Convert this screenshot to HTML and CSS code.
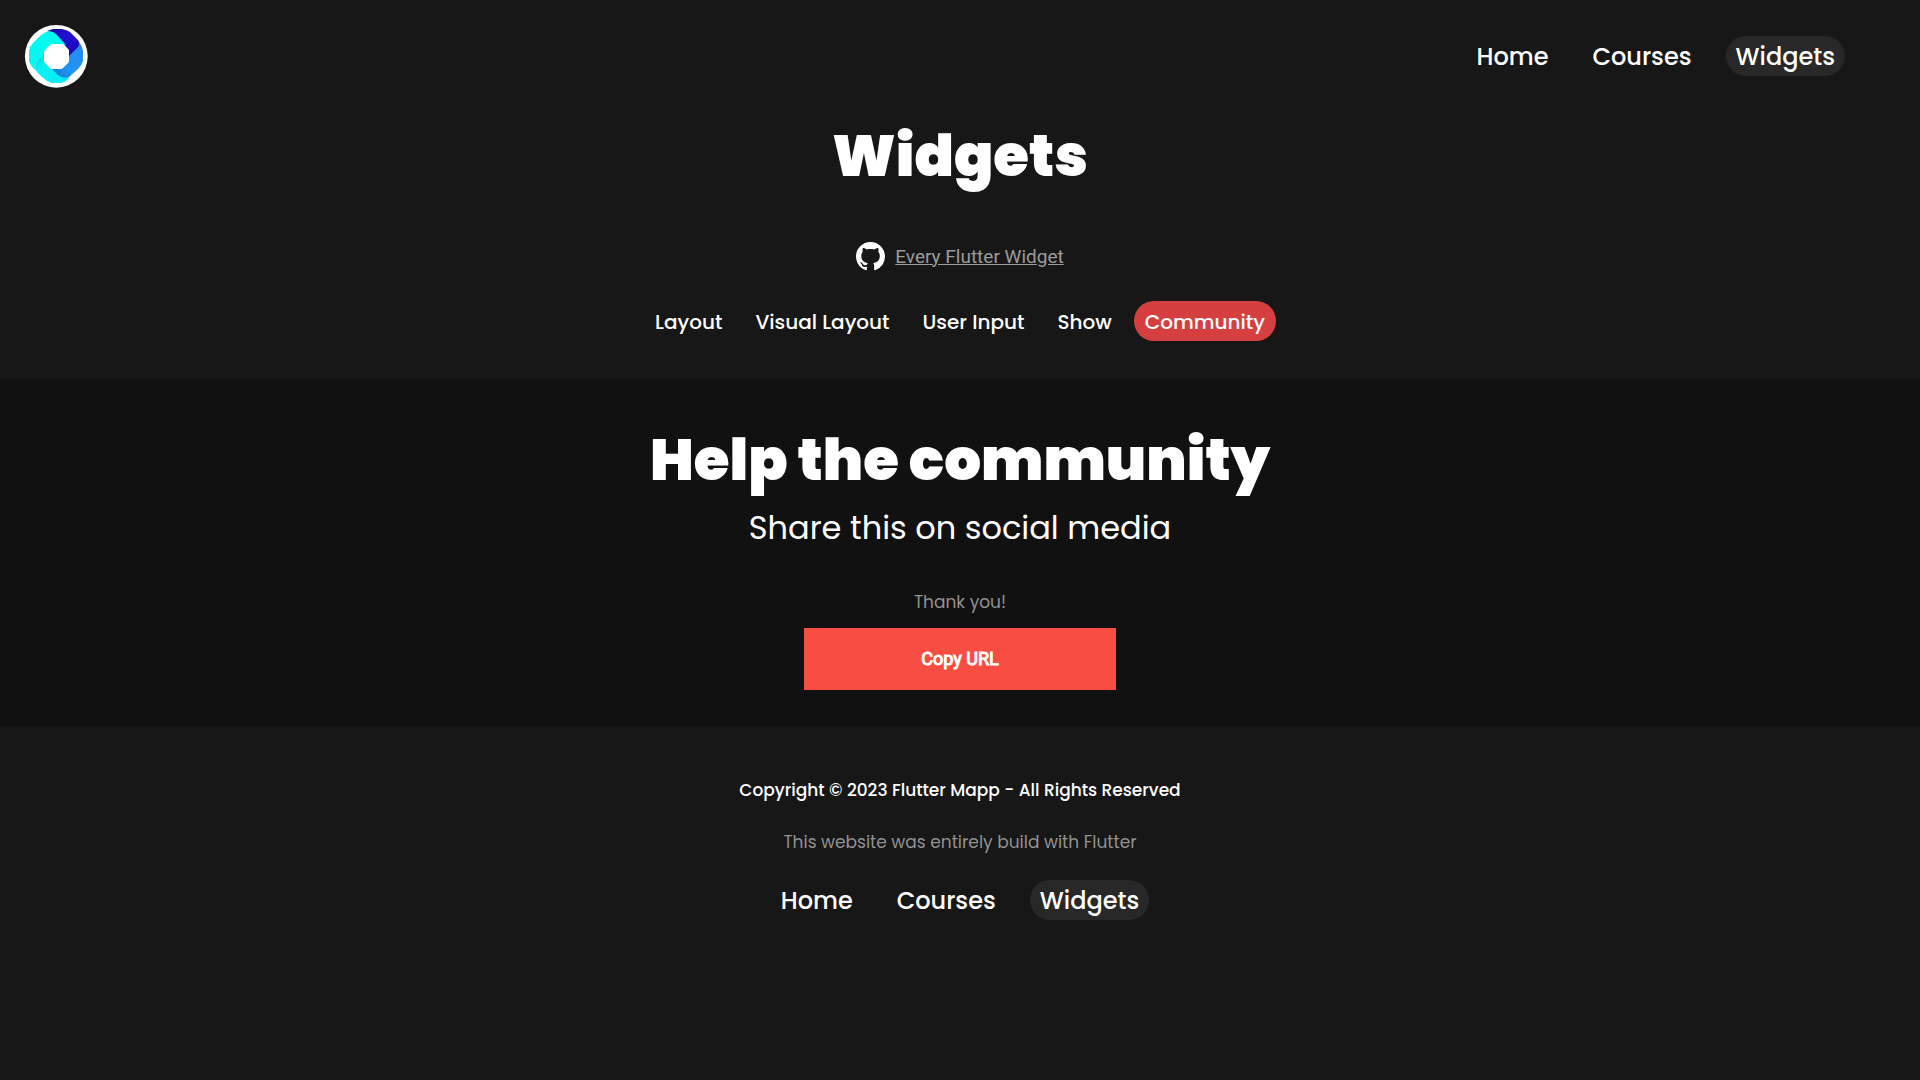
FILE: index.html
```html
<!DOCTYPE html>
<html lang="en">
<head>
<meta charset="utf-8">
<meta name="viewport" content="width=device-width, initial-scale=1">
<title>Widgets - Flutter Mapp</title>
<link rel="stylesheet" href="styles.css">
</head>
<body>
<header class="site-header">
  <a class="logo" href="#" aria-label="Flutter Mapp">
    <svg viewBox="0 0 64 64" width="64" height="64" aria-hidden="true">
      <defs>
        <linearGradient id="sky" x1="1" y1="0" x2="0" y2="1"><stop offset="0" stop-color="#2b86ee"/><stop offset=".6" stop-color="#1e96f5"/><stop offset="1" stop-color="#1673c8"/></linearGradient>
        <linearGradient id="aqua" x1="0" y1="0" x2="1" y2="1"><stop offset="0" stop-color="#04c9d6"/><stop offset=".35" stop-color="#08f3f5"/><stop offset="1" stop-color="#08e8f5"/></linearGradient>
        <linearGradient id="navy" x1="0" y1="0" x2="1" y2="1"><stop offset="0" stop-color="#14068c"/><stop offset=".4" stop-color="#2210d4"/><stop offset="1" stop-color="#1a04b0"/></linearGradient>
      </defs>
      <circle cx="32.300" cy="32.300" r="31.400" fill="#fff"/>
      <path d="M54 17Q58 21 59 27V37Q58 41 54 45L45 53Q40 56 35 53L27 45H37L45 37V31L54 22Z" fill="url(#sky)"/>
      <path d="M23 7L29 5H38Q43 6 46 8L53 15Q57 19 54 23L45 32V26L37 17L32 11Q28 8 23 7Z" fill="url(#navy)"/>
      <path d="M20 28V37L28 45L34 51Q39 55 46 53Q43 57 37 59H28Q22 57 18 53L13 48Q9 43 13 37Z" fill="url(#aqua)"/>
      <path d="M22 8Q28 6 32 10L42 21L37 20H28L20 28V30L13 37Q10 42 12 47Q6 41 5 37V27Q6 22 9 19L17 11Z" fill="#00faf0"/>
      <path d="M29 20H36Q38 20 39 21L44 26Q45 27 45 29V36Q45 38 44 39L39 44Q38 45 36 45H29Q27 45 26 44L21 39Q20 38 20 36V29Q20 27 21 26L26 21Q27 20 29 20Z" fill="#fff"/>
    </svg>
  </a>
  <nav class="site-nav" aria-label="Main">
    <a class="nav-link" href="#">Home</a>
    <a class="nav-link" href="#">Courses</a>
    <a class="nav-link current" href="#" aria-current="page">Widgets</a>
  </nav>
</header>
<main>
  <section class="intro">
    <h1 class="title">Widgets</h1>
    <a class="repo" href="#">
      <svg viewBox="0 0 16 16" width="29" height="29" fill="#fff" aria-hidden="true"><path d="M8 0C3.580 0 0 3.580 0 8c0 3.540 2.290 6.530 5.470 7.590.4.070.55-.17.55-.38 0-.19-.01-.82-.01-1.490-2.010.37-2.530-.49-2.690-.94-.09-.23-.48-.94-.82-1.130-.28-.15-.68-.52-.01-.53.63-.01 1.080.58 1.230.82.72 1.210 1.870.87 2.330.66.07-.52.28-.87.51-1.070-1.780-.2-3.640-.89-3.640-3.950 0-.87.31-1.590.82-2.150-.08-.2-.36-1.020.08-2.120 0 0 .67-.21 2.200.82.64-.18 1.320-.27 2-.27s1.360.09 2 .27c1.530-1.040 2.200-.82 2.200-.82.44 1.100.16 1.920.08 2.120.51.56.82 1.270.82 2.150 0 3.070-1.870 3.750-3.650 3.950.29.25.54.73.54 1.480 0 1.070-.01 1.930-.01 2.200 0 .21.15.46.55.38A8.010 8.010 0 0 0 16 8c0-4.420-3.580-8-8-8z"/></svg>
      <span class="repo-label">Every Flutter Widget</span>
    </a>
    <nav class="tabs" aria-label="Widget categories">
      <a class="tab" href="#">Layout</a>
      <a class="tab" href="#">Visual Layout</a>
      <a class="tab" href="#">User Input</a>
      <a class="tab" href="#">Show</a>
      <a class="tab selected" href="#" aria-current="true">Community</a>
    </nav>
  </section>
  <section class="share">
    <h2 class="title">Help the community</h2>
    <p class="subtitle">Share this on social media</p>
    <p class="note">Thank you!</p>
    <button class="copy" type="button">Copy URL</button>
  </section>
</main>
<footer class="site-footer">
  <p class="copyright">Copyright © 2023 Flutter Mapp - All Rights Reserved</p>
  <p class="note">This website was entirely build with Flutter</p>
  <nav class="site-nav" aria-label="Footer">
    <a class="nav-link" href="#">Home</a>
    <a class="nav-link" href="#">Courses</a>
    <a class="nav-link current" href="#" aria-current="page">Widgets</a>
  </nav>
</footer>
</body>
</html>
```
FILE: styles.css
```css
* { box-sizing: border-box; }
body {
  margin: 0;
  min-height: 100vh;
  background: #171717;
  color: #fff;
  font-family: Poppins, Inter, sans-serif;
}
a { color: inherit; text-decoration: none; }
h1, h2, p { margin: 0; }

.site-header {
  display: flex;
  align-items: center;
  justify-content: space-between;
  height: 112px;
  padding: 0 75px 0 24px;
}
.logo, .logo svg, .repo svg { display: block; }

.site-nav { display: flex; gap: 24px; }
.nav-link {
  padding: 2px 10px 0;
  border-radius: 20px;
  font-size: 24px;
  font-weight: 500;
  line-height: 38px;
}
.nav-link.current { background: #282828; }

.intro, .share, .site-footer {
  display: flex;
  flex-direction: column;
  align-items: center;
  text-align: center;
}
.intro { padding-bottom: 38px; }
.title {
  font-size: 58px;
  font-weight: 900;
  line-height: 88px;
}
.repo {
  display: flex;
  align-items: center;
  gap: 10px;
  margin-top: 40px;
  height: 32px;
  color: #9b9b9b;
  font-family: Roboto, sans-serif;
  font-size: 19px;
}
.repo-label { text-decoration: underline; }
.tabs { display: flex; gap: 11px; margin-top: 29px; }
.tab {
  padding: 2px 11px 0;
  border-radius: 20px;
  font-size: 20px;
  font-weight: 500;
  line-height: 38px;
}
.tab.selected { background: #d63f40; }

.share {
  padding: 37px 0;
  background: #111;
}
.subtitle { font-size: 32px; line-height: 48px; }
.note {
  color: #929292;
  font-size: 17px;
  line-height: 28px;
}
.share .note { margin: 36px 0 12px; }
.copy {
  width: 312px;
  height: 62px;
  padding: 0 0 2px;
  border: 0;
  background: #f84d43;
  color: #fff;
  font: 18px Roboto, sans-serif;
  -webkit-text-stroke: 1px #fff;
  cursor: pointer;
}

.site-footer { padding: 49px 0; }
.copyright { font-size: 17px; font-weight: 500; line-height: 28px; }
.site-footer .note { margin: 24px 0; }
```
